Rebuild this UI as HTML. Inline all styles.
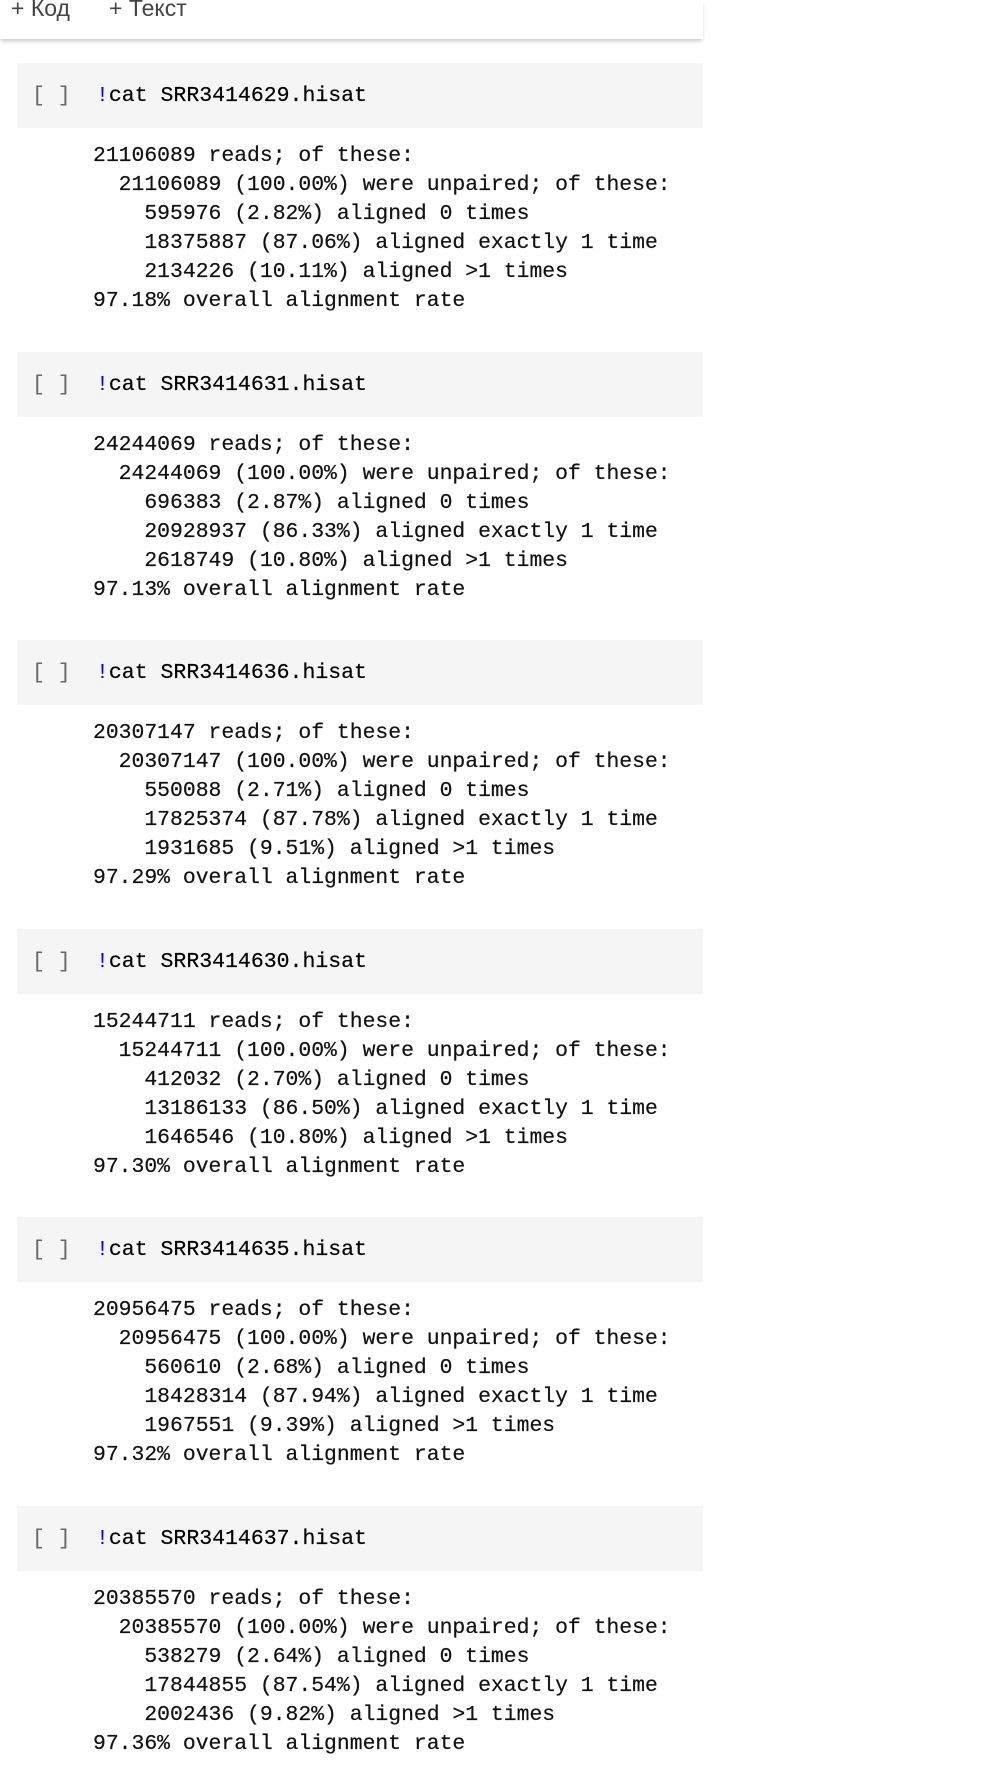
<!DOCTYPE html>
<html><head><meta charset="utf-8"><style>
html,body{margin:0;padding:0;background:#fff;width:991px;height:1783px;overflow:hidden;position:relative;font-family:"Liberation Mono",monospace;}
.tb{position:absolute;left:0;top:0;width:703px;height:39px;background:#fff;box-shadow:0 3px 4px -1px rgba(0,0,0,0.22);}
.tb span{position:absolute;top:-5px;font-family:"Liberation Sans","DejaVu Sans",sans-serif;font-size:23px;color:#444;white-space:pre;}
.cell{position:absolute;left:17px;width:686px;height:65px;background:#f5f5f5;}
.br{position:absolute;left:15px;top:16px;font-size:21.5px;color:#666;line-height:34px;white-space:pre;}
.code{position:absolute;left:79px;top:16px;font-size:21.5px;color:#000;line-height:34px;white-space:pre;-webkit-text-stroke:0.2px #000;}
.code b{font-weight:normal;color:#0000ff;-webkit-text-stroke:0;}
pre{position:absolute;left:93px;margin:0;font-family:"Liberation Mono",monospace;font-size:21.4px;line-height:28.9px;color:#111;-webkit-text-stroke:0.2px #111;}
</style></head><body>
<div class="tb"><span style="left:11px">+ Код</span><span style="left:109px">+ Текст</span></div>

<div class="cell" style="top:63px"><div class="br">[ ]</div><div class="code"><b>!</b>cat SRR3414629.hisat</div></div>
<pre style="top:142px">21106089 reads; of these:
  21106089 (100.00%) were unpaired; of these:
    595976 (2.82%) aligned 0 times
    18375887 (87.06%) aligned exactly 1 time
    2134226 (10.11%) aligned >1 times
97.18% overall alignment rate</pre>

<div class="cell" style="top:352px"><div class="br">[ ]</div><div class="code"><b>!</b>cat SRR3414631.hisat</div></div>
<pre style="top:431px">24244069 reads; of these:
  24244069 (100.00%) were unpaired; of these:
    696383 (2.87%) aligned 0 times
    20928937 (86.33%) aligned exactly 1 time
    2618749 (10.80%) aligned >1 times
97.13% overall alignment rate</pre>

<div class="cell" style="top:640px"><div class="br">[ ]</div><div class="code"><b>!</b>cat SRR3414636.hisat</div></div>
<pre style="top:719px">20307147 reads; of these:
  20307147 (100.00%) were unpaired; of these:
    550088 (2.71%) aligned 0 times
    17825374 (87.78%) aligned exactly 1 time
    1931685 (9.51%) aligned >1 times
97.29% overall alignment rate</pre>

<div class="cell" style="top:929px"><div class="br">[ ]</div><div class="code"><b>!</b>cat SRR3414630.hisat</div></div>
<pre style="top:1008px">15244711 reads; of these:
  15244711 (100.00%) were unpaired; of these:
    412032 (2.70%) aligned 0 times
    13186133 (86.50%) aligned exactly 1 time
    1646546 (10.80%) aligned >1 times
97.30% overall alignment rate</pre>

<div class="cell" style="top:1217px"><div class="br">[ ]</div><div class="code"><b>!</b>cat SRR3414635.hisat</div></div>
<pre style="top:1296px">20956475 reads; of these:
  20956475 (100.00%) were unpaired; of these:
    560610 (2.68%) aligned 0 times
    18428314 (87.94%) aligned exactly 1 time
    1967551 (9.39%) aligned >1 times
97.32% overall alignment rate</pre>

<div class="cell" style="top:1506px"><div class="br">[ ]</div><div class="code"><b>!</b>cat SRR3414637.hisat</div></div>
<pre style="top:1585px">20385570 reads; of these:
  20385570 (100.00%) were unpaired; of these:
    538279 (2.64%) aligned 0 times
    17844855 (87.54%) aligned exactly 1 time
    2002436 (9.82%) aligned >1 times
97.36% overall alignment rate</pre>
</body></html>
